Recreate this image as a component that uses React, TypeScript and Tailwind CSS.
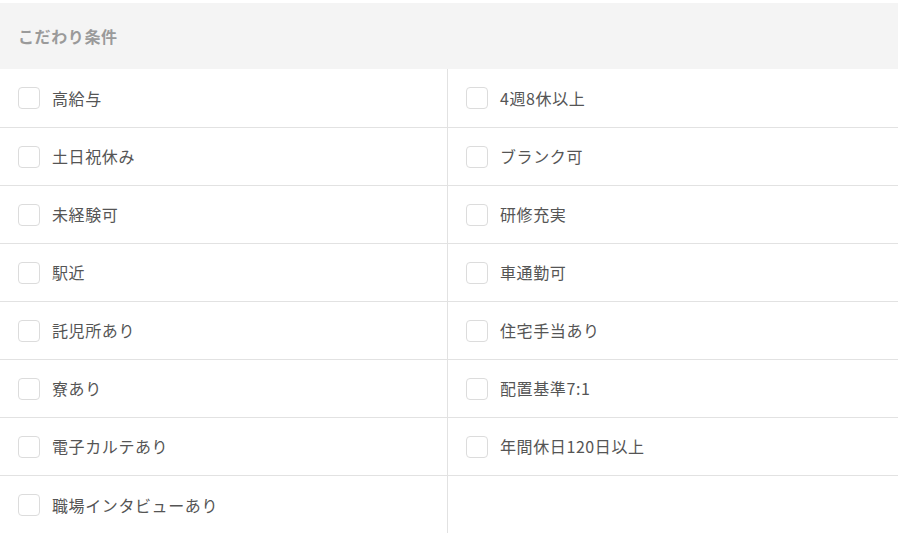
const items = [
  '高給与',
  '4週8休以上',
  '土日祝休み',
  'ブランク可',
  '未経験可',
  '研修充実',
  '駅近',
  '車通勤可',
  '託児所あり',
  '住宅手当あり',
  '寮あり',
  '配置基準7:1',
  '電子カルテあり',
  '年間休日120日以上',
  '職場インタビューあり',
  '',
];

export default function App() {
  return (
    <div
      className="w-[900px] h-[533px] overflow-hidden bg-white pt-[3px]"
      style={{ fontFamily: '"Noto Sans CJK JP", "Noto Sans", sans-serif' }}
    >
      <div className="w-[898px]">
        {/* Header */}
        <div className="h-[66px] bg-[#f4f4f4] flex items-center px-[18px]">
          <h2 className="text-[16px] font-bold tracking-[0.6px] text-[#9a9a9a]">こだわり条件</h2>
        </div>

        {/* Options */}
        <div className="grid grid-cols-[448px_450px]">
          {items.map((label, i) => {
            const left = i % 2 === 0;
            const firstRow = i < 2;
            const lastRow = i >= items.length - 2;
            return (
              <div
                key={i}
                className={`flex items-center px-[18px] ${firstRow ? 'h-[59px]' : 'h-[58px]'} ${
                  lastRow ? '' : 'border-b border-[#e2e2e2]'
                } ${left ? 'border-r border-r-[#e2e2e2]' : ''}`}
              >
                {label && (
                  <label className="flex items-center gap-3 cursor-pointer">
                    <span className="w-[22px] h-[22px] rounded-[4px] border border-[#dcdcdc] bg-white shrink-0" />
                    <span className="text-[16px] tracking-[0.6px] text-[#555] -mt-[1px]">{label}</span>
                  </label>
                )}
              </div>
            );
          })}
        </div>
      </div>
    </div>
  );
}
